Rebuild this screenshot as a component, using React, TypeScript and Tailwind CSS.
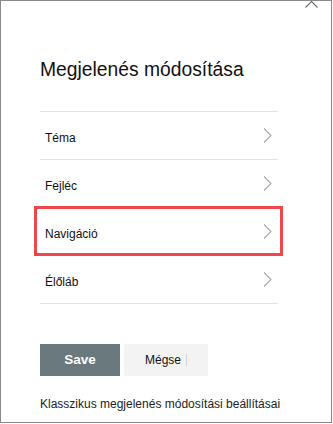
const rows = ["Téma", "Fejléc", "Navigáció", "Élőláb"];

function Chevron() {
  return (
    <svg width="9" height="15" viewBox="0 0 9 15" fill="none" className="shrink-0">
      <polyline points="1,0.5 8,7.5 1,14.5" stroke="#a6a6a6" strokeWidth="1.1" />
    </svg>
  );
}

export default function App() {
  return (
    <div className="relative w-[332px] h-[423px] overflow-hidden border border-[#8a8a8a] bg-white font-['Liberation_Sans',Arial,sans-serif]">
      <svg
        className="absolute right-[13px] top-[-6px]"
        width="13"
        height="13"
        viewBox="0 0 13 13"
        fill="none"
      >
        <path d="M0.5 0.5 L12.5 12.5 M12.5 0.5 L0.5 12.5" stroke="#6b6b6b" strokeWidth="1.1" />
      </svg>

      <div className="pl-[39px] pr-[53px] pt-[56px]">
        <h1 className="text-[19.3px] leading-[26px] text-[#111]">Megjelenés módosítása</h1>

        <ul className="mt-[28px] border-t border-[#e3e3e3]">
          {rows.map((label) => (
            <li
              key={label}
              className="relative flex h-[48px] items-center justify-between border-b border-[#e3e3e3] pl-[5px] pr-[6px]"
            >
              <span className="mt-[5px] text-[12px] leading-[16px] text-[#111]">{label}</span>
              <Chevron />
              {label === "Navigáció" && (
                <div className="absolute -left-[6px] -right-[5px] -top-[2px] -bottom-[1px] border-[3px] border-[#f0474c]" />
              )}
            </li>
          ))}
        </ul>

        <div className="mt-[40px] flex gap-[4px]">
          <button className="h-[32px] w-[80px] bg-[#69797e] text-[13.5px] font-bold text-white">
            Save
          </button>
          <button className="flex h-[32px] w-[84px] items-center justify-center gap-[5px] bg-[#f3f3f3] text-[12px] text-[#111]">
            <span>Mégse</span>
            <span className="h-[12px] w-px bg-[#d4d4d4]" />
          </button>
        </div>

        <p className="mt-[20px] whitespace-nowrap text-[12px] leading-[16px] text-[#222]">
          Klasszikus megjelenés módosítási beállításai
        </p>
      </div>
    </div>
  );
}
